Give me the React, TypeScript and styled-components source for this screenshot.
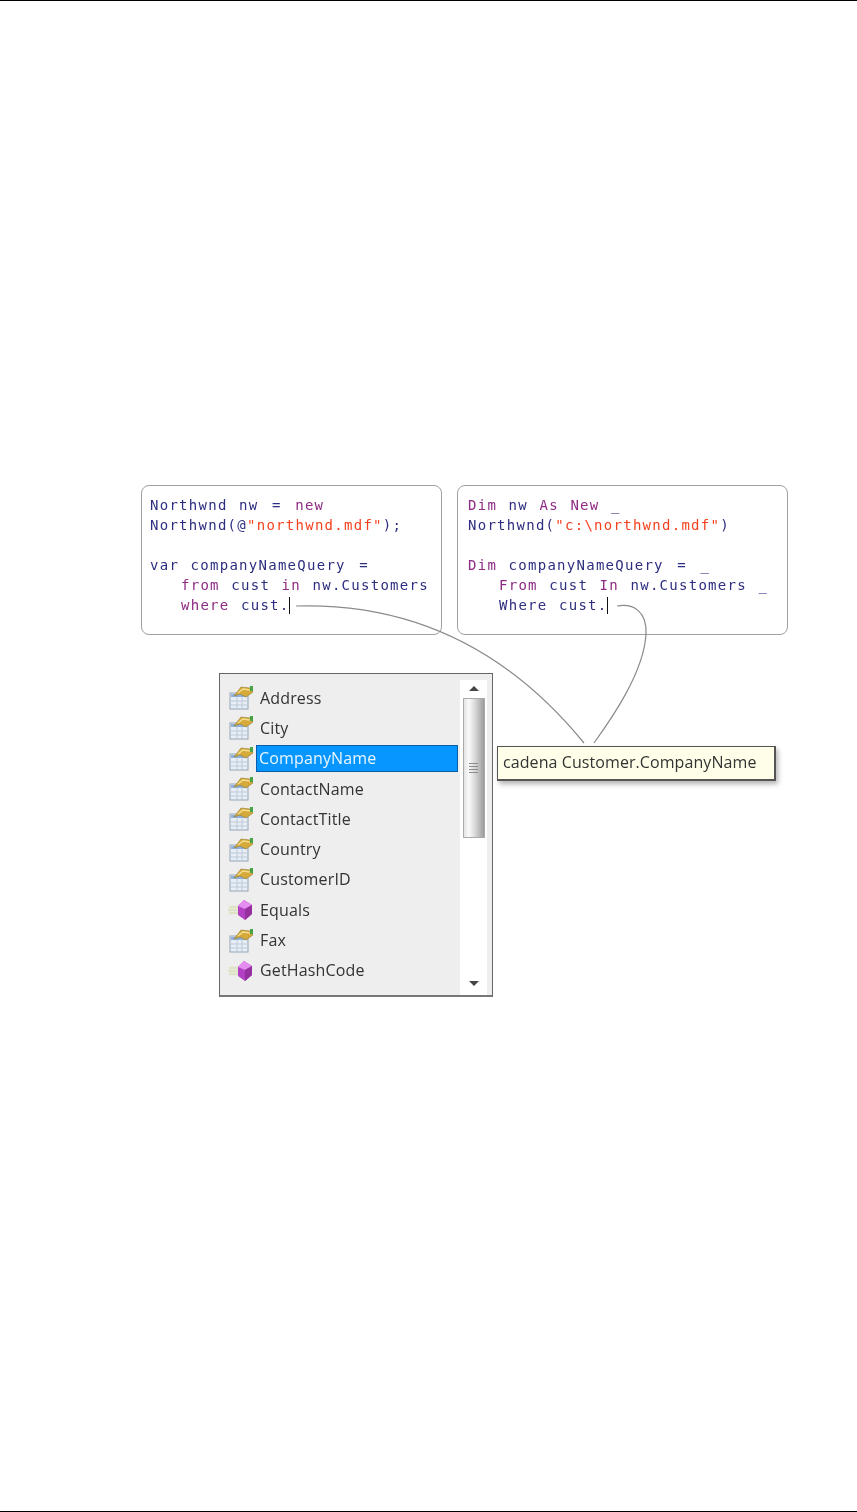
import React from 'react'
import styled, { createGlobalStyle } from 'styled-components'

const GlobalStyle = createGlobalStyle`
  html, body {
    margin: 0;
    background: #fff;
  }
`

const Page = styled.div`
  position: relative;
  box-sizing: border-box;
  width: 857px;
  height: 1512px;
  padding-top: 484px;
  border-top: 1px solid #000;
  border-bottom: 1px solid #000;
  background: #fff;
`

const CodeRow = styled.div`
  display: flex;
  gap: 15px;
  margin-left: 141px;
`

const CodeCard = styled.div<{ $width: number; $inset: number }>`
  box-sizing: border-box;
  width: ${({ $width }) => $width}px;
  height: 150px;
  padding: 9px 0 0 ${({ $inset }) => $inset}px;
  border: 1px solid #a0a0a0;
  border-radius: 8px;
  background: #fff;
  filter: blur(0.45px);
`

const CodeLine = styled.div<{ $indent?: boolean }>`
  height: 20px;
  padding-left: ${({ $indent }) => ($indent ? 31 : 0)}px;
  font: 14px/20px 'DejaVu Sans Mono', monospace;
  letter-spacing: 1.27px;
  word-spacing: 1.8px;
  color: #2e2e80;
  white-space: pre;
`

const Keyword = styled.span`
  color: #8e2b84;
`

const Str = styled.span`
  color: #f5421e;
`

const Operator = styled.span`
  margin: 0 2px;
`

const Caret = styled.span`
  display: inline-block;
  width: 1px;
  height: 17px;
  margin-left: -1px;
  vertical-align: -4px;
  background: #111;
`

const ListRow = styled.div`
  display: flex;
  align-items: flex-start;
  gap: 4px;
  margin-top: 38px;
  margin-left: 219px;
`

const ListBox = styled.div`
  display: flex;
  box-sizing: border-box;
  width: 274px;
  height: 324px;
  border: 1px solid #666;
  border-bottom: 2px solid #777;
  background: #eee;
  filter: blur(0.4px);
`

const Items = styled.div`
  flex: 1;
  padding: 9px 0 0 8px;
`

const Item = styled.div`
  display: flex;
  align-items: center;
  height: 30.3px;
  gap: 2px;
`

const ItemIcon = styled.svg`
  flex: none;
  width: 26px;
  height: 26px;
`

const ItemLabel = styled.span<{ $selected?: boolean }>`
  box-sizing: border-box;
  width: 202px;
  height: 27px;
  padding-left: ${({ $selected }) => ($selected ? 2 : 3)}px;
  border: 1px solid ${({ $selected }) => ($selected ? '#0a5fa8' : 'transparent')};
  background: ${({ $selected }) => ($selected ? '#0796ff' : 'transparent')};
  color: ${({ $selected }) => ($selected ? '#e8f6ff' : '#333')};
  font: 16px/25px 'Open Sans', sans-serif;
  letter-spacing: 0.15px;
`

const Scrollbar = styled.div`
  display: flex;
  flex-direction: column;
  align-items: center;
  box-sizing: border-box;
  width: 28px;
  margin: 6px 5px 0 2px;
  background: #fff;
`

const Arrow = styled.div<{ $down?: boolean }>`
  flex: none;
  width: 0;
  height: 0;
  margin: ${({ $down }) => ($down ? 'auto 0 9px' : '6px 0 7px')};
  border-left: 5px solid transparent;
  border-right: 5px solid transparent;
  border-${({ $down }) => ($down ? 'top' : 'bottom')}: 5px solid #444;
`

const Thumb = styled.div`
  display: flex;
  flex-direction: column;
  align-items: center;
  justify-content: center;
  gap: 2px;
  box-sizing: border-box;
  width: 22px;
  height: 140px;
  border: 1px solid #aaa;
  background: linear-gradient(90deg, #e4e4e4 0%, #fafafa 25%, #d8d8d8 55%, #9c9c9c 100%);
`

const Grip = styled.span`
  width: 9px;
  height: 1px;
  background: #8a8a8a;
`

const Tooltip = styled.div`
  box-sizing: border-box;
  width: 279px;
  height: 35px;
  margin-top: 73px;
  padding-left: 5px;
  border: 1px solid #555;
  border-width: 1px 2px 2px 1px;
  background: #ffffe9;
  box-shadow: 2px 3px 5px rgba(0, 0, 0, 0.3);
  color: #333;
  font: 16px/31px 'Open Sans', sans-serif;
  letter-spacing: 0.08px;
  filter: blur(0.35px);
`

const Connectors = styled.svg`
  position: absolute;
  top: -1px;
  left: 0;
  width: 857px;
  height: 1512px;
  pointer-events: none;
`

const PropertyIcon = () => (
  <ItemIcon viewBox="0 0 26 26">
    <rect x="2" y="8" width="18" height="16" fill="#e8eef5" stroke="#93a3b5" />
    <rect x="3" y="9" width="16" height="3" fill="#8fb0d8" />
    <path d="M3 16h16M3 20h16M9 12v11M14 12v11" stroke="#bcc9d8" fill="none" />
    <path d="M6 11 L13 2 L22 3 L25 7 L18 12 L12 9 Z" fill="#d6aa3a" stroke="#8f7a30" strokeWidth="0.6" />
    <path d="M10 8 L15 4 L22 5" stroke="#f3de8e" strokeWidth="1.4" fill="none" />
    <rect x="22" y="1" width="3" height="5" fill="#46a346" />
  </ItemIcon>
)

const MethodIcon = () => (
  <ItemIcon viewBox="0 0 26 26">
    <path d="M1 10h9M0 13h10M1 16h9" stroke="#dfe3c6" strokeWidth="2.4" fill="none" />
    <path d="M16 3 L24 8 L24 17 L17 23 L10 18 L10 9 Z" fill="#b23fc4" />
    <path d="M16 3 L24 8 L17 12 L10 9 Z" fill="#e58cf0" />
    <path d="M17 12 L24 8 L24 17 L17 23 Z" fill="#96309f" />
  </ItemIcon>
)

const items = [
  { label: 'Address', kind: 'property' },
  { label: 'City', kind: 'property' },
  { label: 'CompanyName', kind: 'property', selected: true },
  { label: 'ContactName', kind: 'property' },
  { label: 'ContactTitle', kind: 'property' },
  { label: 'Country', kind: 'property' },
  { label: 'CustomerID', kind: 'property' },
  { label: 'Equals', kind: 'method' },
  { label: 'Fax', kind: 'property' },
  { label: 'GetHashCode', kind: 'method' },
]

const App = () => (
  <Page>
    <GlobalStyle />
    <CodeRow>
      <CodeCard $width={301} $inset={8}>
        <CodeLine>Northwnd nw <Operator>=</Operator> <Keyword>new</Keyword></CodeLine>
        <CodeLine>Northwnd(@<Str>"northwnd.mdf"</Str>);</CodeLine>
        <CodeLine> </CodeLine>
        <CodeLine>var companyNameQuery <Operator>=</Operator></CodeLine>
        <CodeLine $indent><Keyword>from</Keyword> cust <Keyword>in</Keyword> nw.Customers</CodeLine>
        <CodeLine $indent><Keyword>where</Keyword> cust.<Caret /></CodeLine>
      </CodeCard>
      <CodeCard $width={331} $inset={10}>
        <CodeLine><Keyword>Dim</Keyword> nw <Keyword>As New</Keyword> _</CodeLine>
        <CodeLine>Northwnd(<Str>"c:\northwnd.mdf"</Str>)</CodeLine>
        <CodeLine> </CodeLine>
        <CodeLine><Keyword>Dim</Keyword> companyNameQuery <Operator>=</Operator> _</CodeLine>
        <CodeLine $indent><Keyword>From</Keyword> cust <Keyword>In</Keyword> nw.Customers _</CodeLine>
        <CodeLine $indent>Where cust.<Caret /></CodeLine>
      </CodeCard>
    </CodeRow>
    <ListRow>
      <ListBox>
        <Items>
          {items.map((item) => (
            <Item key={item.label}>
              {item.kind === 'method' ? <MethodIcon /> : <PropertyIcon />}
              <ItemLabel $selected={item.selected}>{item.label}</ItemLabel>
            </Item>
          ))}
        </Items>
        <Scrollbar>
          <Arrow />
          <Thumb>
            <Grip />
            <Grip />
            <Grip />
            <Grip />
          </Thumb>
          <Arrow $down />
        </Scrollbar>
      </ListBox>
      <Tooltip>cadena Customer.CompanyName</Tooltip>
    </ListRow>
    <Connectors viewBox="0 0 857 1512">
      <path d="M296 606 C400 603 500 640 584 743" fill="none" stroke="#8a8a8a" strokeWidth="1.2" />
      <path d="M617 606 C634 603 647 612 646 634 C644 672 612 718 594 743" fill="none" stroke="#8a8a8a" strokeWidth="1.2" />
    </Connectors>
  </Page>
)

export default App
